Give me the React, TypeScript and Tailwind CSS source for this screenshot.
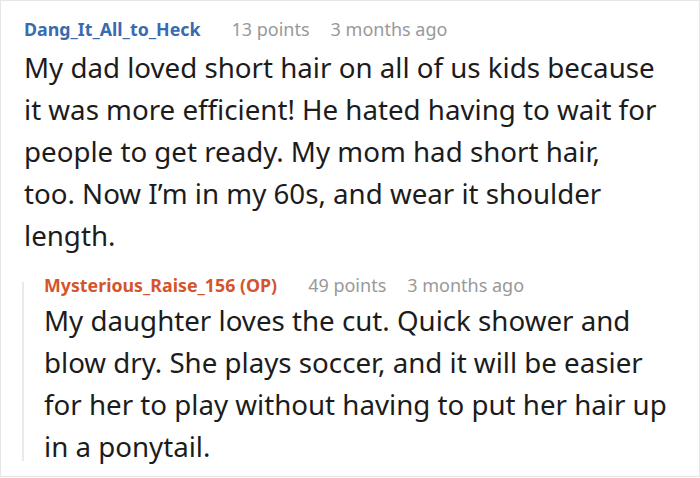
import React from 'react';

const font = "font-['Noto_Sans',_'Open_Sans',_sans-serif]";

const Meta = ({ name, color, points }: { name: string; color: string; points: string }) => (
  <div className="flex items-baseline h-[24px] leading-[24px] whitespace-nowrap">
    <span className={`text-[17.8px] font-bold ${color}`}>{name}</span>
    <span className="ml-[31px] text-[18px] text-[#999999]">{points}</span>
    <span className="ml-[21px] text-[18px] text-[#999999]">3 months ago</span>
  </div>
);

const Body = ({ lines, className = '' }: { lines: string[]; className?: string }) => (
  <p className={`text-[27.7px] leading-[42px] text-[#1c1c1c] whitespace-nowrap ${className}`}>
    {lines.map((l, i) => (
      <React.Fragment key={i}>
        {l}
        {i < lines.length - 1 && <br />}
      </React.Fragment>
    ))}
  </p>
);

export default function App() {
  return (
    <div className={`w-[700px] h-[478px] bg-white overflow-hidden ${font}`}>
      <div className="h-[477px] border border-[#e6e6e6] pl-[23px] pt-[16px]">
        <Meta name="Dang_It_All_to_Heck" color="text-[#3a6ab0]" points="13 points" />
        <Body
          className="mt-[5px]"
          lines={[
            'My dad loved short hair on all of us kids because',
            'it was more efficient! He hated having to wait for',
            'people to get ready. My mom had short hair,',
            'too. Now I’m in my 60s, and wear it shoulder',
            'length.',
          ]}
        />
        <div className="mt-[17px] -ml-[2px] flex">
          <div className="w-[2px] mt-[9px] mb-[6px] bg-[#eaeaea]" />
          <div className="pl-[20px]">
            <Meta name="Mysterious_Raise_156 (OP)" color="text-[#d4552b]" points="49 points" />
            <Body
              className="mt-[2px]"
              lines={[
                'My daughter loves the cut. Quick shower and',
                'blow dry. She plays soccer, and it will be easier',
                'for her to play without having to put her hair up',
                'in a ponytail.',
              ]}
            />
          </div>
        </div>
      </div>
    </div>
  );
}
